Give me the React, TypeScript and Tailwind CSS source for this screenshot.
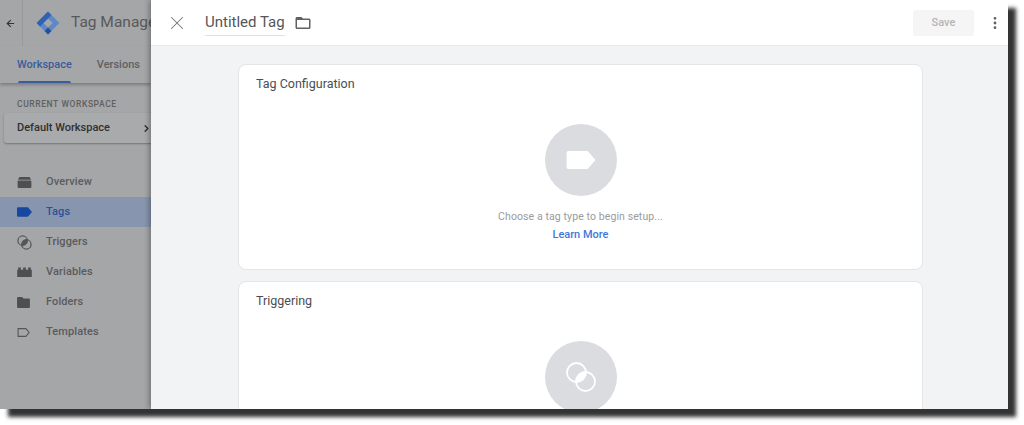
import React from 'react';
import { ArrowLeft, X, MoreVertical, ChevronRight } from 'lucide-react';

const TagShape = ({ className = '' }: { className?: string }) => (
  <svg viewBox="0 0 16 10" className={className} fill="currentColor">
    <path d="M1 0h10.2c.4 0 .7.2.9.4L16 5l-3.9 4.6c-.2.2-.5.4-.9.4H1c-.6 0-1-.4-1-1V1c0-.6.4-1 1-1z" />
  </svg>
);

const OverviewIcon = () => (
  <svg viewBox="0 0 16 12" className="w-[15px] h-[11px]" fill="#4f4f50">
    <path d="M3 0h10c.6 0 1 .3 1.2.8L15 3H1l.8-2.2C2 .3 2.4 0 3 0z" />
    <rect x="0.5" y="3.8" width="15" height="8.2" rx="1" />
  </svg>
);

const TriggerIcon = () => (
  <svg viewBox="0 0 16 16" className="w-[15px] h-[15px]">
    <circle cx="6" cy="6" r="5" fill="none" stroke="#555556" strokeWidth="1.3" />
    <circle cx="10" cy="10" r="5" fill="none" stroke="#555556" strokeWidth="1.3" />
    <path d="M10.9 5.1A5 5 0 0 1 5.1 10.9 5 5 0 0 1 10.9 5.1z" fill="#555556" />
  </svg>
);

const VariableIcon = () => (
  <svg viewBox="0 0 16 11" className="w-[15px] h-[10px]" fill="#4f4f50">
    <path d="M0 3h1V.5h3V3h2.5V.5h3V3H12V.5h3V3h1v8H0z" />
  </svg>
);

const FolderIcon = () => (
  <svg viewBox="0 0 14 12" className="w-[13px] h-[11px]" fill="#4f4f50">
    <path d="M1 0h4.5L7 1.6h6c.6 0 1 .4 1 1V11c0 .6-.4 1-1 1H1c-.6 0-1-.4-1-1V1c0-.6.4-1 1-1z" />
  </svg>
);

const TemplateIcon = () => (
  <svg viewBox="0 0 14 10" className="w-[13px] h-[9px]" fill="none" stroke="#555556" strokeWidth="1.2">
    <path d="M1 .7h8.3c.3 0 .5.1.7.3L13.2 5 10 9c-.2.2-.4.3-.7.3H1z" />
  </svg>
);

const Logo = () => (
  <svg viewBox="0 0 24 24" className="w-[24px] h-[24px]">
    <path d="M12 .6 23.4 12 12 23.4.6 12z" fill="#5f88c6" />
    <path d="M12 7.4 16.6 12 12 16.6 7.4 12z" fill="#a5a6a8" />
    <path d="M12 .6 15.4 4 4 15.4.6 12z" fill="#2f62b4" />
    <path d="M8.6 20 12 16.6 15.4 20 12 23.4z" fill="#24509a" />
  </svg>
);

const navItems = [
  { label: 'Overview', icon: <OverviewIcon /> },
  { label: 'Tags', icon: <TagShape className="w-[15px] h-[10px] text-[#17479e]" />, active: true },
  { label: 'Triggers', icon: <TriggerIcon /> },
  { label: 'Variables', icon: <VariableIcon /> },
  { label: 'Folders', icon: <FolderIcon /> },
  { label: 'Templates', icon: <TemplateIcon /> },
];

function Sidebar() {
  return (
    <div className="w-[151px] shrink-0 h-full overflow-hidden bg-[#a5a6a8] flex flex-col">
      <div className="h-[46px] w-[151px] shrink-0 flex items-center overflow-hidden">
        <div className="w-[23px] shrink-0 h-full flex items-center justify-center border-r border-[#979899]">
          <ArrowLeft size={11} strokeWidth={2.5} className="text-[#333436] ml-[-1px]" />
        </div>
        <div className="ml-[13px] shrink-0"><Logo /></div>
        <span className="ml-[11px] text-[15.5px] leading-none whitespace-nowrap text-[#58595b]">Tag Manager</span>
      </div>
      <div className="h-[37px] w-full shrink-0 flex items-start pl-[17px] gap-[25px] shadow-[0_2px_3px_rgba(0,0,0,0.25)]">
        <div className="h-full flex flex-col items-center relative">
          <span className="mt-[11px] text-[11px] leading-[16px] font-medium text-[#3a5c9e]">Workspace</span>
          <div className="absolute bottom-0 left-[1px] right-[1px] h-[2px] rounded-t bg-[#3a5c9e]" />
        </div>
        <span className="mt-[11px] text-[11px] leading-[16px] font-medium text-[#5f6062]">Versions</span>
      </div>
      <div className="pl-[17px] mt-[15px] text-[8.5px] leading-[12px] font-medium tracking-[0.6px] text-[#5f6062]">CURRENT WORKSPACE</div>
      <div className="ml-[4px] mt-[3px] h-[30px] w-[160px] shrink-0 rounded-[3px] bg-[#a9aaac] shadow-[0_1px_2px_rgba(0,0,0,0.3)] flex items-center pl-[13px]">
        <span className="text-[11px] font-medium text-[#2f3032]">Default Workspace</span>
        <ChevronRight size={11} strokeWidth={3} className="ml-[31px] shrink-0 text-[#2f3032]" />
      </div>
      <div className="mt-[24px] flex flex-col">
        {navItems.map((item) => (
          <div
            key={item.label}
            className={`h-[30px] flex items-center ${item.active ? 'bg-[#8796ae]' : ''}`}
          >
            <div className="w-[46px] pl-[17px] shrink-0 flex items-center">{item.icon}</div>
            <span className={`text-[11px] font-medium tracking-[0.1px] ${item.active ? 'text-[#2c5296]' : 'text-[#5a5b5d]'}`}>
              {item.label}
            </span>
          </div>
        ))}
      </div>
    </div>
  );
}

function ConfigCard({ title, children }: { title: string; children: React.ReactNode }) {
  return (
    <div className="w-[685px] shrink-0 rounded-[8px] bg-white border border-[#e3e5e7] px-[17px] pt-[10px]">
      <div className="text-[12.5px] leading-[18px] text-[#4b4d50]">{title}</div>
      <div className="flex flex-col items-center">{children}</div>
    </div>
  );
}

function Panel() {
  return (
    <div className="flex-1 h-full flex flex-col bg-[#f1f3f4] shadow-[-2px_0_5px_rgba(0,0,0,0.3)] relative min-w-0">
      <div className="h-[46px] shrink-0 bg-white border-b border-[#e6e8ea] flex items-center pl-[15px] pr-[5px]">
        <X size={22} strokeWidth={1.1} className="shrink-0 text-[#757779]" />
        <div className="ml-[17px] h-[26px] border-b border-[#dfe1e3] text-[15px] leading-[25px] text-[#54565a]">Untitled Tag</div>
        <svg viewBox="0 0 24 24" className="ml-[9px] w-[18px] h-[18px]" fill="#5f6164">
          <path d="M20 6h-8l-2-2H4c-1.1 0-2 .9-2 2v12c0 1.1.9 2 2 2h16c1.1 0 2-.9 2-2V8c0-1.1-.9-2-2-2zm0 12H4V8h16v10z" />
        </svg>
        <div className="ml-auto w-[61px] h-[26px] pt-[1px] rounded-[3px] bg-[#f5f5f5] flex items-center justify-center text-[11px] font-medium tracking-[0.1px] text-[#b4b5b7]">Save</div>
        <MoreVertical size={16} strokeWidth={2.2} className="ml-[13px] text-[#5f6164]" />
      </div>
      <div className="flex-1 flex flex-col items-center pt-[18px] gap-[11px] overflow-hidden min-h-0 pl-[2px]">
        <ConfigCard title="Tag Configuration">
          <div className="mt-[31px] w-[72px] h-[72px] rounded-full bg-[#dadce0] flex items-center justify-center">
            <TagShape className="w-[30px] h-[18px] text-white" />
          </div>
          <div className="mt-[14px] text-[10.5px] leading-[14px] tracking-[0.1px] text-[#9a9b9d]">Choose a tag type to begin setup...</div>
          <div className="mt-[4px] mb-[27px] text-[11px] leading-[14px] font-medium text-[#3f78dc]">Learn More</div>
        </ConfigCard>
        <ConfigCard title="Triggering">
          <div className="mt-[31px] mb-[40px] w-[72px] h-[72px] rounded-full bg-[#dadce0] flex items-center justify-center">
            <svg viewBox="0 0 32 32" className="w-[32px] h-[32px]">
              <circle cx="11.5" cy="11.5" r="9.5" fill="none" stroke="#fff" strokeWidth="1.8" />
              <circle cx="20.5" cy="20.5" r="9.5" fill="none" stroke="#fff" strokeWidth="1.8" />
              <path d="M21 11A9.5 9.5 0 0 1 11 21 9.5 9.5 0 0 1 21 11z" fill="#fff" />
            </svg>
          </div>
        </ConfigCard>
      </div>
    </div>
  );
}

export default function App() {
  return (
    <div className="w-[1024px] h-[425px] bg-white overflow-hidden" style={{ fontFamily: 'Roboto, sans-serif' }}>
      <div className="w-[1008px] h-[409px] flex overflow-hidden shadow-[8px_8px_4px_rgba(0,0,0,0.8)]">
        <Sidebar />
        <Panel />
      </div>
    </div>
  );
}
